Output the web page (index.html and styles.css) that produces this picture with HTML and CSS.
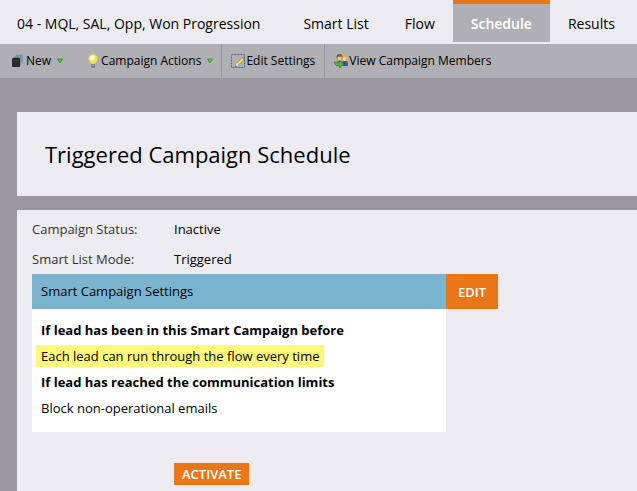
FILE: index.html
```html
<!DOCTYPE html>
<html lang="en">
<head>
    <meta charset="UTF-8">
    <meta name="viewport" content="width=device-width, initial-scale=1.0">
    <title>Triggered Campaign Schedule</title>
    <link rel="stylesheet" href="styles.css">
</head>
<body>
    <nav class="tabs">
        <a href="#">04 - MQL, SAL, Opp, Won Progression</a>
        <a href="#">Smart List</a>
        <a href="#">Flow</a>
        <a href="#" class="active" aria-current="page">Schedule</a>
        <a href="#">Results</a>
    </nav>

    <div class="toolbar">
        <button type="button" class="tool-new">
            <svg class="icon" viewBox="0 0 14 14">
                <path d="M5 1.500h6v7" fill="none" stroke="#4f9dcc" stroke-width="1.500"/>
                <path d="M2 4l2-1.500h5.500L8.500 4z" fill="#777"/>
                <path d="M8.500 4l1-1.500V11l-1 2z" fill="#606468"/>
                <rect x="1" y="4" width="8" height="9" rx="1" fill="#26282a"/>
                <path d="M2 7h6" stroke="#3f4346"/>
            </svg>
            <span>New</span>
            <svg class="arrow" viewBox="0 0 6 6">
                <path d="M.5 1h5L3 5z" fill="#6fbd58" stroke="#3a9a32"/>
            </svg>
        </button>
        <button type="button" class="tool-actions">
            <svg class="icon" viewBox="0 0 14 14">
                <path d="M7 .3a4.4 4.4 0 0 0-4.500 4.500c0 2.200 2 3 2.200 5h4.600c.2-2 2.200-2.800 2.200-5A4.400 4.400 0 0 0 7 .3z" fill="#f5e35c" stroke="#dcc447" stroke-width=".5"/>
                <ellipse cx="6.300" cy="3.800" rx="2.400" ry="2.600" fill="#fffbc5"/>
                <path d="M5 10h4v2.500L8 13.700H6L5 12.500z" fill="#777b80"/>
                <path d="M5 11.200h4" stroke="#c2c5c8" stroke-width=".7"/>
            </svg>
            <span>Campaign Actions</span>
            <svg class="arrow" viewBox="0 0 6 6">
                <path d="M.5 1h5L3 5z" fill="#6fbd58" stroke="#3a9a32"/>
            </svg>
        </button>
        <button type="button" class="tool-edit">
            <svg class="icon" viewBox="0 0 14 14">
                <rect x=".5" y=".5" width="13" height="13" fill="none" stroke="#39719f" stroke-dasharray="2 1"/>
                <path d="M4.500 12.500l1-3.200 6-6 2 2-6 6z" fill="#e9c35c" stroke="#a98236" stroke-width=".6"/>
                <path d="M6.300 10.300l5.900-5.900" stroke="#fff0a8" stroke-width=".8"/>
                <path d="M11 3.800l1-1 2 2-1 1z" fill="#bd796a"/>
                <path d="M4 13l1.500-3.700 2 2z" fill="#eee4cd"/>
                <path d="M4 13l.8-1.800 1 1z" fill="#333"/>
            </svg>
            <span>Edit Settings</span>
        </button>
        <button type="button" class="tool-members">
            <svg class="icon" viewBox="0 0 14 14">
                <circle cx="10.500" cy="3.500" r="2.800" fill="#dab93f"/>
                <path d="M8.500 4q1-1 3.500-.5V6l-1.500 1.200L9 6z" fill="#f3d79b"/>
                <path d="M8 8l2-1 3 .5 1 4.500H8z" fill="#294f9a"/>
                <path d="M11 7l2.500 1 .5 3-2-1z" fill="#b5302b"/>
                <circle cx="5.500" cy="3" r="3" fill="#80572f"/>
                <path d="M3.500 3q2.500 0 4-.7v3L5.800 7 3.500 5.500z" fill="#f1c692"/>
                <path d="M2 10l1-3 2.500-.5L8 7l1.500 5H3z" fill="#a56836"/>
                <path d="M.5 7.500l1.700 1.300 3.300-.3V6.700L10 10l-4.500 3.700v-2H2.500Q.5 10.500.5 7.500z" fill="#4db83f" stroke="#27812a" stroke-width=".7"/>
            </svg>
            <span>View Campaign Members</span>
        </button>
    </div>

    <main>
        <header class="panel title">
            <h1>Triggered Campaign Schedule</h1>
        </header>

        <section class="panel details">
            <dl class="status">
                <dt>Campaign Status:</dt>
                <dd>Inactive</dd>
                <dt>Smart List Mode:</dt>
                <dd>Triggered</dd>
            </dl>

            <div class="settings">
                <div class="settings-box">
                    <h2>Smart Campaign Settings</h2>
                    <div class="settings-body">
                        <h3>If lead has been in this Smart Campaign before</h3>
                        <p><mark>Each lead can run through the flow every time</mark></p>
                        <h3>If lead has reached the communication limits</h3>
                        <p>Block non-operational emails</p>
                    </div>
                </div>
                <button type="button" class="edit-button">EDIT</button>
            </div>

            <button type="button" class="activate-button">ACTIVATE</button>
        </section>
    </main>
</body>
</html>
```
FILE: styles.css
```css
* {
    box-sizing: border-box;
}

body {
    margin: 0;
    min-height: 100vh;
    display: flex;
    flex-direction: column;
    font-family: "Open Sans", "Noto Sans", sans-serif;
    font-size: 13px;
    line-height: 20px;
    color: #000;
    background: #99979c;
}

h1, h2, h3, p, dl, dd {
    margin: 0;
    font-size: 13px;
    font-weight: normal;
}

button {
    border: none;
    font: inherit;
    cursor: pointer;
}

.tabs {
    display: flex;
    height: 44px;
    padding-bottom: 2px;
    background: #ecebf0;
}

.tabs a {
    padding: 10px 18px 0;
    border-top: 4px solid transparent;
    font-size: 14px;
    color: #000;
    text-decoration: none;
    white-space: nowrap;
}

.tabs a:first-child {
    padding-left: 17px;
    padding-right: 25px;
}

.tabs .active {
    border-top-color: #e97619;
    background: #b0afb3;
    color: #fff;
    font-weight: 600;
}

.toolbar {
    display: flex;
    height: 34px;
    background: #b0afb3;
}

.toolbar button {
    display: flex;
    align-items: center;
    padding: 0 9px;
    background: none;
    color: #000;
    font-size: 12px;
    white-space: nowrap;
}

.toolbar .tool-new {
    padding: 0 11px;
}

.toolbar .tool-actions {
    padding: 0 8px 0 12px;
}

.toolbar .tool-edit,
.toolbar .tool-members {
    border-left: 1px solid #99979c;
}

.icon {
    width: 14px;
    height: 14px;
    margin-right: 1px;
}

.arrow {
    width: 6px;
    height: 6px;
    margin-left: 6px;
}

main {
    flex: 1;
    display: flex;
    flex-direction: column;
    gap: 14px;
    padding: 34px 0 0 17px;
}

.panel {
    background: #ecebf0;
}

.title {
    padding: 28px;
}

.title h1 {
    font-size: 22px;
    line-height: 28px;
}

.details {
    flex: 1;
    padding: 4px 15px 6px;
}

.status {
    display: grid;
    grid-template-columns: 142px 1fr;
    line-height: 30px;
}

.status dt {
    color: #333;
}

.settings {
    display: flex;
    align-items: flex-start;
}

.settings-box {
    flex: 0 1 414px;
    background: #fff;
}

.settings-box h2 {
    padding: 0 9px;
    line-height: 35px;
    background: #7ab4cf;
}

.settings-body {
    padding: 8px 9px 11px;
    line-height: 26px;
}

.settings-body h3 {
    font-weight: bold;
}

.settings-body mark {
    display: inline-block;
    margin-left: -5px;
    padding: 0 5px;
    line-height: 22px;
    color: #000;
    background: #fdf87c;
}

.edit-button,
.activate-button {
    background: #e97619;
    color: #fff;
    font-weight: 600;
}

.edit-button {
    height: 35px;
    padding: 0 12px;
}

.activate-button {
    display: block;
    height: 22px;
    margin: 31px 0 0 142px;
    padding: 0 8px;
}
```
